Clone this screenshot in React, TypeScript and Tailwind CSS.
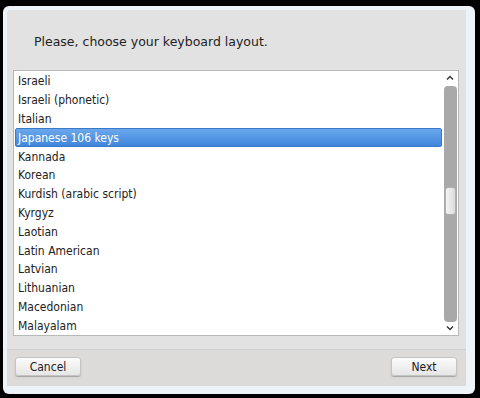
import React from "react";

const items = [
  "Israeli",
  "Israeli (phonetic)",
  "Italian",
  "Japanese 106 keys",
  "Kannada",
  "Korean",
  "Kurdish (arabic script)",
  "Kyrgyz",
  "Laotian",
  "Latin American",
  "Latvian",
  "Lithuanian",
  "Macedonian",
  "Malayalam",
];

const cond = { fontFamily: '"DejaVu Sans Condensed", "DejaVu Sans", sans-serif', fontStretch: "condensed" as const };

export default function App() {
  return (
    <div
      className="w-[480px] h-[398px] bg-black pt-[6px] pl-[3px] overflow-hidden"
      style={{ fontFamily: '"DejaVu Sans", sans-serif' }}
    >
      <div className="w-[472px] h-[388px] rounded-[6px] bg-[#eef3f8] pl-[4px] pt-[4px] pr-[9px] pb-[8px] flex">
        <div className="flex-1 flex flex-col bg-[#e2e2e2] rounded-tl-[3px]">
          <div className="h-[60px] flex items-center pl-[27px] pt-[4px] text-[12.5px] text-[#222]">
            Please, choose your keyboard layout.
          </div>
          <div className="ml-[6px] w-[446px] h-[266px] bg-white border border-[#b8b8b8] flex">
            <div className="flex-1 flex flex-col pt-[1px] pl-[1px]" style={cond}>
              {items.map((it) =>
                it === "Japanese 106 keys" ? (
                  <div
                    key={it}
                    className="h-[19px] flex items-center pl-[2px] text-[12px] text-white rounded-[2px] border border-[#3a78c8] bg-gradient-to-b from-[#6aa8ec] to-[#3f86dc]"
                  >
                    {it}
                  </div>
                ) : (
                  <div key={it} className="h-[19px] flex items-center pl-[3px] text-[12px] text-[#222]">
                    {it}
                  </div>
                )
              )}
            </div>
            <div className="w-[16px] flex flex-col items-center">
              <svg width="10" height="10" viewBox="0 0 10 10" className="mt-[2px]">
                <path d="M2 6.5 L5 3.5 L8 6.5" stroke="#333" strokeWidth="1.4" fill="none" />
              </svg>
              <div className="mt-[3px] w-[13px] h-[236px] rounded-[4px] bg-[#a9a9a9] flex flex-col items-center pt-[101px]">
                <div className="w-[11px] h-[28px] rounded-[3px] bg-gradient-to-r from-[#f4f4f4] to-[#dcdcdc] border border-[#b0b0b0]" />
              </div>
              <svg width="10" height="10" viewBox="0 0 10 10" className="mt-[1px]">
                <path d="M2 3.5 L5 6.5 L8 3.5" stroke="#333" strokeWidth="1.4" fill="none" />
              </svg>
            </div>
          </div>
          <div className="h-[14px] border-b border-[#cfcfcf]" />
          <div className="flex-1 bg-[#dcdbd9] flex items-start justify-between pt-[7px] pl-[8px] pr-[9px]">
            <button style={cond} className="w-[66px] h-[19px] rounded-[3px] bg-gradient-to-b from-[#fbfbfb] to-[#e6e6e6] border border-[#c4c4c4] shadow-[0_1px_1px_rgba(0,0,0,0.25)] text-[12px] text-[#222] leading-none">
              Cancel
            </button>
            <button style={cond} className="w-[66px] h-[19px] rounded-[3px] bg-gradient-to-b from-[#fbfbfb] to-[#e6e6e6] border border-[#c4c4c4] shadow-[0_1px_1px_rgba(0,0,0,0.25)] text-[12px] text-[#222] leading-none">
              Next
            </button>
          </div>
        </div>
      </div>
    </div>
  );
}
